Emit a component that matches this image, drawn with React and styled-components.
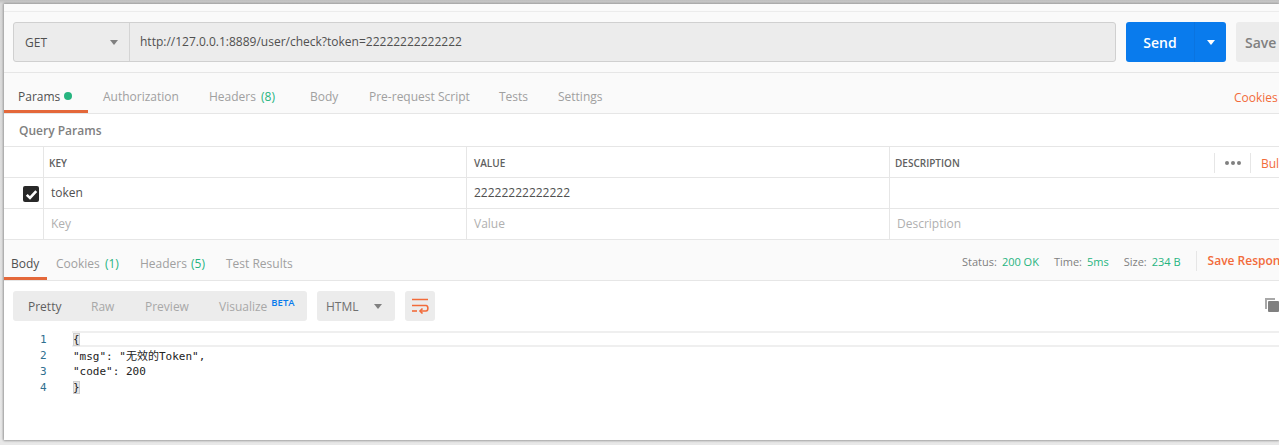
import React from "react";
import styled, { createGlobalStyle } from "styled-components";

const Global = createGlobalStyle`
  html, body { margin: 0; padding: 0; background: #e4e4e4; }
  body { font-family: "Open Sans", "Noto Sans CJK SC", sans-serif; overflow: hidden; }
  * { box-sizing: border-box; }
`;

const Screen = styled.div`
  width: 1279px; height: 445px; overflow: hidden; padding: 4px 0 5px 4px;
  background: linear-gradient(#bdbdbd, #d8d8d8 4px, #e8e8e8 100%);
`;
const Window = styled.div`
  width: 1275px; height: 436px; background: #fff; box-shadow: -1px 0 2px #aaa, 0 -1px 2px #999, 0 1px 2px #aaa;
  display: flex; flex-direction: column; overflow: hidden;
`;
const TopStrip = styled.div`
  height: 8px; background: #fafafa; border-bottom: 1px solid #ececec; flex: none;
`;
const RequestBar = styled.div`
  flex: none; height: 61px; padding: 10px 0 0 9px; display: flex; background: #fafafa;
  border-bottom: 1px solid #e6e6e6; width: 1275px;
`;
const UrlGroup = styled.div`
  width: 1103px; height: 40px; display: flex; background: #ececec; border: 1px solid #d0d0d0; border-radius: 3px; flex: none;
`;
const Method = styled.div`
  width: 116px; border-right: 1px solid #d4d4d4; display: flex; align-items: center; justify-content: space-between;
  padding: 0 11px; font-size: 12px; font-weight: 500; color: #505050;
`;
const Caret = styled.span`
  width: 0; height: 0; border-left: 4px solid transparent; border-right: 4px solid transparent;
  border-top: 5px solid ${p => p.$c || "#808080"}; display: inline-block;
`;
const Url = styled.div`
  flex: 1; padding-left: 10px; display: flex; align-items: center; font-size: 12px; color: #505050; padding-bottom: 1px;
`;
const SendButton = styled.div`
  margin-left: 10px; width: 100px; height: 40px; flex: none; background: #097bed; border-radius: 3px; color: #fff;
  display: flex; align-items: center; font-size: 14px; font-weight: 600;
`;
const SendLabel = styled.span`
  width: 69px; height: 40px; text-align: center; border-right: 1px solid #0a74e0; line-height: 42px; flex: none;
`;
const SendCaret = styled.span`
  flex: 1; display: flex; justify-content: center;
`;
const SaveButton = styled.div`
  margin-left: 10px; width: 70px; height: 40px; flex: none; background: #ececec; border-radius: 3px 0 0 3px; color: #808080;
  font-size: 14px; font-weight: 600; line-height: 42px; padding-left: 9px;
`;
const TabBar = styled.div`
  flex: none; height: 41px; display: flex; align-items: center; background: #fafafa; border-bottom: 1px solid #e6e6e6;
  font-size: 12px; color: #a0a0a0;
`;
const Tab = styled.div`
  height: 100%; display: flex; align-items: center; flex: none; white-space: nowrap;
  width: ${p => p.$w}px; padding-left: ${p => p.$pl || 0}px;
  color: ${p => (p.$active ? "#505050" : "#a0a0a0")};
  border-bottom: ${p => (p.$active ? "3px solid #e4683a" : "none")};
  padding-top: ${p => (p.$active ? "9px" : "6px")};
`;
const Count = styled.span`color: #26b47f; margin-left: ${p => p.$ml || 0}px;`;
const Dot = styled.span`width: 8px; height: 8px; border-radius: 50%; background: #26b47f; display: inline-block; margin-left: 4px;`;
const RightLink = styled.div`
  margin-left: auto; color: #f26b3a; font-size: 12px; white-space: nowrap; width: 45px; overflow: hidden; flex: none; padding-top: 8px;
`;
const SectionTitle = styled.div`
  flex: none; height: 33px; padding-left: 15px; display: flex; align-items: center; font-size: 12px; font-weight: 600; color: #808080;
  border-bottom: 1px solid #e6e6e6;
`;
const Row = styled.div`
  flex: none; height: 31px; display: grid; grid-template-columns: 39px 423px 423px 1fr;
  border-bottom: 1px solid #e6e6e6; font-size: 12px; color: #505050;
`;
const Cell = styled.div`
  border-left: ${p => (p.$first ? "none" : "1px solid #e6e6e6")}; display: flex; align-items: center; padding-left: ${p => p.$pl ?? 7}px;
  padding-bottom: ${p => (p.$head || p.$first ? 0 : 2)}px;
  padding-top: ${p => (p.$head ? 2 : 0)}px;
  color: ${p => (p.$ph ? "#b0b0b0" : p.$head ? "#606060" : "#505050")};
  font-size: ${p => (p.$head ? "10px" : "12px")}; font-weight: ${p => (p.$head ? 600 : 400)};
  overflow: hidden; white-space: nowrap;
`;
const Check = styled.span`
  width: 16px; height: 16px; border-radius: 2px; background: #282828; display: flex; align-items: center; justify-content: center; margin: 2px 0 0 19px;
`;
const HeadTools = styled.div`
  display: flex; align-items: center; margin-left: auto; height: 20px; width: 65px; flex: none;
`;
const Dots = styled.div`
  width: 37px; height: 20px; border-left: 1px solid #e6e6e6; border-right: 1px solid #e6e6e6; display: flex; align-items: center; justify-content: center; gap: 2px; flex: none;
`;
const DotMini = styled.span`width: 4px; height: 4px; border-radius: 50%; background: #808080;`;
const BulkLink = styled.span`color: #f26b3a; font-size: 12px; font-weight: 400; padding-left: 10px;`;
const Meta = styled.div`
  margin-left: auto; display: flex; align-items: center; font-size: 11px; color: #808080; white-space: nowrap; flex: none; width: 324px;
  padding: 2px 0 0 7px;
`;
const MetaItem = styled.span`margin-right: 15px; flex: none;`;
const Val = styled.span`color: #26b47f; margin-left: 5px;`;
const SaveLink = styled.span`
  border-left: 1px solid #e6e6e6; padding-left: 11px; color: #f26b3a; font-weight: 600; font-size: 12px; line-height: 20px; flex: none;
`;
const Toolbar = styled.div`
  flex: none; height: 50px; display: flex; align-items: center; padding: 0 0 0 9px;
`;
const Segment = styled.div`
  height: 30px; width: 294px; background: #ececec; border-radius: 3px; display: flex; align-items: center; font-size: 12px; color: #a0a0a0; flex: none;
`;
const Seg = styled.span`
  flex: none; width: ${p => p.$w}px; padding-left: ${p => p.$pl}px; color: ${p => (p.$active ? "#606060" : "#a8a8a8")};
`;
const Beta = styled.sup`
  color: #097bed; font-size: 9.5px; font-weight: 600; margin-left: 4px; vertical-align: 5px; line-height: 0;
`;
const FormatSelect = styled.div`
  margin-left: 10px; width: 78px; height: 30px; background: #ececec; border-radius: 3px; display: flex; align-items: center; justify-content: space-between;
  padding: 0 13px 0 9px; font-size: 12px; color: #707070; flex: none;
`;
const WrapBtn = styled.div`
  margin-left: 10px; width: 30px; height: 30px; background: #ececec; border-radius: 3px; display: flex; align-items: center; justify-content: center; flex: none;
`;
const CopyIcon = styled.svg`margin: 0 0 2px auto; flex: none;`;
const Code = styled.div`
  flex: 1; font-family: "DejaVu Sans Mono", "Liberation Mono", "Noto Sans CJK SC", monospace; font-size: 11px; color: #222;
`;
const CodeLine = styled.div`
  height: 16px; display: flex; align-items: center; position: relative;
`;
const ActiveBand = styled.span`
  position: absolute; left: 68px; right: 0; top: 0; bottom: 0; border-top: 2px solid #efefef; border-bottom: 2px solid #efefef; z-index: 0;
`;
const LineNo = styled.span`width: 69px; flex: none; padding-left: 36px; color: #2f6f8f;`;
const Brace = styled.span`background: #e6e6e6; outline: 1px solid #cfcfcf; outline-offset: -1px; position: relative;`;

export default function App() {
  return (
    <Screen>
      <Global />
      <Window>
        <TopStrip />
        <RequestBar>
          <UrlGroup>
            <Method>GET<Caret /></Method>
            <Url>http://127.0.0.1:8889/user/check?token=22222222222222</Url>
          </UrlGroup>
          <SendButton>
            <SendLabel>Send</SendLabel>
            <SendCaret><Caret $c="#fff" /></SendCaret>
          </SendButton>
          <SaveButton>Save</SaveButton>
        </RequestBar>
        <TabBar>
          <Tab $active $w={84} $pl={14}>Params<Dot /></Tab>
          <Tab $w={106} $pl={15}>Authorization</Tab>
          <Tab $w={100} $pl={15}>Headers&nbsp;<Count $ml={2}>(8)</Count></Tab>
          <Tab $w={59} $pl={16}>Body</Tab>
          <Tab $w={146} $pl={16}>Pre-request Script</Tab>
          <Tab $w={59}>Tests</Tab>
          <Tab $w={60}>Settings</Tab>
          <RightLink>Cookies</RightLink>
        </TabBar>
        <SectionTitle>Query Params</SectionTitle>
        <Row>
          <Cell $first />
          <Cell $head $pl={5}>KEY</Cell>
          <Cell $head>VALUE</Cell>
          <Cell $head $pl={5}>
            DESCRIPTION
            <HeadTools>
              <Dots><DotMini /><DotMini /><DotMini /></Dots>
              <BulkLink>Bulk Edit</BulkLink>
            </HeadTools>
          </Cell>
        </Row>
        <Row>
          <Cell $first $pl={0}>
            <Check>
              <svg width="13" height="13" viewBox="0 0 12 12"><path d="M1.6 6.3 L4.6 9.2 L10.4 2.8" fill="none" stroke="#fff" strokeWidth="2.4" /></svg>
            </Check>
          </Cell>
          <Cell>token</Cell>
          <Cell>22222222222222</Cell>
          <Cell />
        </Row>
        <Row>
          <Cell $first />
          <Cell $ph>Key</Cell>
          <Cell $ph>Value</Cell>
          <Cell $ph>Description</Cell>
        </Row>
        <TabBar>
          <Tab $active $w={43} $pl={7}>Body</Tab>
          <Tab $w={84} $pl={9}>Cookies&nbsp;<Count $ml={2}>(1)</Count></Tab>
          <Tab $w={86} $pl={9}>Headers&nbsp;<Count $ml={1}>(5)</Count></Tab>
          <Tab $w={90} $pl={9}>Test Results</Tab>
          <Meta>
            <MetaItem>Status:<Val>200 OK</Val></MetaItem>
            <MetaItem>Time:<Val>5ms</Val></MetaItem>
            <MetaItem>Size:<Val>234 B</Val></MetaItem>
            <SaveLink>Save Response</SaveLink>
          </Meta>
        </TabBar>
        <Toolbar>
          <Segment>
            <Seg $active $w={63} $pl={15}>Pretty</Seg>
            <Seg $w={53} $pl={15}>Raw</Seg>
            <Seg $w={75} $pl={16}>Preview</Seg>
            <Seg $w={103} $pl={15}>Visualize<Beta>BETA</Beta></Seg>
          </Segment>
          <FormatSelect>HTML<Caret /></FormatSelect>
          <WrapBtn>
            <svg width="18" height="16" viewBox="0 0 18 16" fill="none" stroke="#f26b3a" strokeWidth="1.6">
              <path d="M1 1.5h16M1 7.5h14c2.5 0 2.5 5.5 0 5.5H9" />
              <path d="M11.5 10.5 L9 13 L11.5 15.5" />
              <path d="M1 13h5" />
            </svg>
          </WrapBtn>
          <CopyIcon width="14" height="14" viewBox="0 0 14 14">
            <path d="M0 0h10v2H2v9H0z" fill="#a8a8a8" />
            <rect x="3" y="3" width="11" height="11" rx="1" fill="#808080" />
          </CopyIcon>
        </Toolbar>
        <Code>
          <CodeLine><ActiveBand /><LineNo>1</LineNo><Brace>{"{"}</Brace></CodeLine>
          <CodeLine><LineNo>2</LineNo><span>"msg": "无效的Token",</span></CodeLine>
          <CodeLine><LineNo>3</LineNo><span>"code": 200</span></CodeLine>
          <CodeLine><LineNo>4</LineNo><Brace>{"}"}</Brace></CodeLine>
        </Code>
      </Window>
    </Screen>
  );
}
